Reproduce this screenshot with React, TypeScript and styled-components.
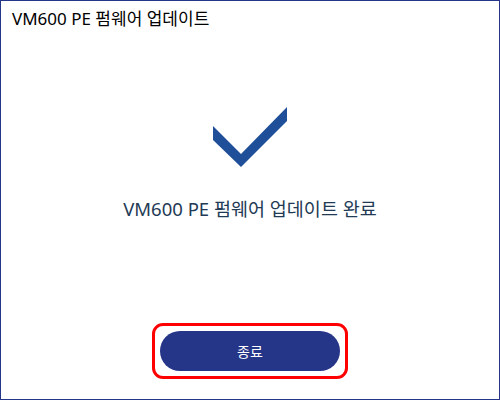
import styled, { createGlobalStyle } from "styled-components";

const GlobalStyle = createGlobalStyle`
    html, body {
        margin: 0;
        padding: 0;
        background: #ffffff;
    }
`

const Window = styled.div`
    box-sizing: border-box;
    width: 500px;
    height: 400px;
    border: 1px solid #253587;
    background: #ffffff;
    display: flex;
    flex-direction: column;
    font-family: "Noto Sans", "Noto Sans CJK KR", sans-serif;
`
const TitleBar = styled.div`
    height: 33px;
    padding-left: 11px;
    display: flex;
    align-items: center;
    font-size: 17px;
    color: #000000;
`
const Body = styled.div`
    flex: 1;
    display: flex;
    flex-direction: column;
    align-items: center;
`
const CheckIcon = styled.svg`
    margin-top: 73px;
    display: block;
`
const Message = styled.div`
    margin-top: 30px;
    font-size: 18.5px;
    line-height: 24px;
    color: #233a55;
`
const Focus = styled.div`
    margin-top: auto;
    margin-bottom: 20px;
    padding: 5px;
    border: 3px solid #ff0000;
    border-radius: 11px;
`
const CloseButton = styled.button`
    width: 180px;
    height: 40px;
    border: none;
    border-radius: 20px;
    background: #253587;
    color: #ffffff;
    font-family: "Noto Sans CJK KR", sans-serif;
    font-size: 14px;
    display: block;
    cursor: pointer;
`

export default function App() {
    return (
        <>
            <GlobalStyle/>
            <Window>
                <TitleBar>VM600 PE 펌웨어 업데이트</TitleBar>
                <Body>
                    <CheckIcon width="74" height="60" viewBox="0 0 74 60">
                        <polygon points="0,19 28,47 74,0 74,14 28,60 0,33" fill="#1f4f99"/>
                    </CheckIcon>
                    <Message>VM600 PE 펌웨어 업데이트 완료</Message>
                    <Focus>
                        <CloseButton>종료</CloseButton>
                    </Focus>
                </Body>
            </Window>
        </>
    );
}
